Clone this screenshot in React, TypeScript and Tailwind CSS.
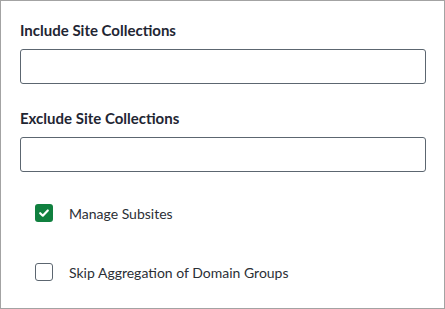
import React from 'react'

const Field = ({ label, top }: { label: string; top: string }) => {
    return (
        <div className={top}>
            <div className="text-[15px] leading-5 font-bold text-[#1f2633]">{label}</div>
            <input type="text" className="mt-[9px] block w-[406px] h-[35px] rounded-[3px] border border-[#5c6670] bg-white outline-none" />
        </div>
    )
}

const Check = ({ label, checked, top }: { label: string; checked?: boolean; top: string }) => {
    return (
        <div className={`flex items-center h-5 pl-[15px] gap-4 ${top}`}>
            {checked ? (
                <div className="w-[18px] h-[18px] rounded-[3px] bg-[#10803f] flex items-center justify-center">
                    <svg width="12" height="12" viewBox="0 0 12 12" fill="none">
                        <path d="M2.2 6.2 L4.8 8.7 L9.8 3.5" stroke="white" strokeWidth="2.2" strokeLinecap="round" strokeLinejoin="round" />
                    </svg>
                </div>
            ) : (
                <div className="w-[18px] h-[18px] rounded-[3px] border border-[#5c6670] bg-white"></div>
            )}
            <span className="text-[14px] text-[#2b2f36]">{label}</span>
        </div>
    )
}

export default function App() {
    return (
        <div className="w-[445px] h-[309px] bg-white border border-[#a3a3a3] px-[19px] pt-[19px] font-['Lato',sans-serif]">
            <Field label="Include Site Collections" top="" />
            <Field label="Exclude Site Collections" top="mt-[24px]" />
            <Check label="Manage Subsites" checked top="mt-[31px]" />
            <Check label="Skip Aggregation of Domain Groups" top="mt-[39px]" />
        </div>
    )
}
